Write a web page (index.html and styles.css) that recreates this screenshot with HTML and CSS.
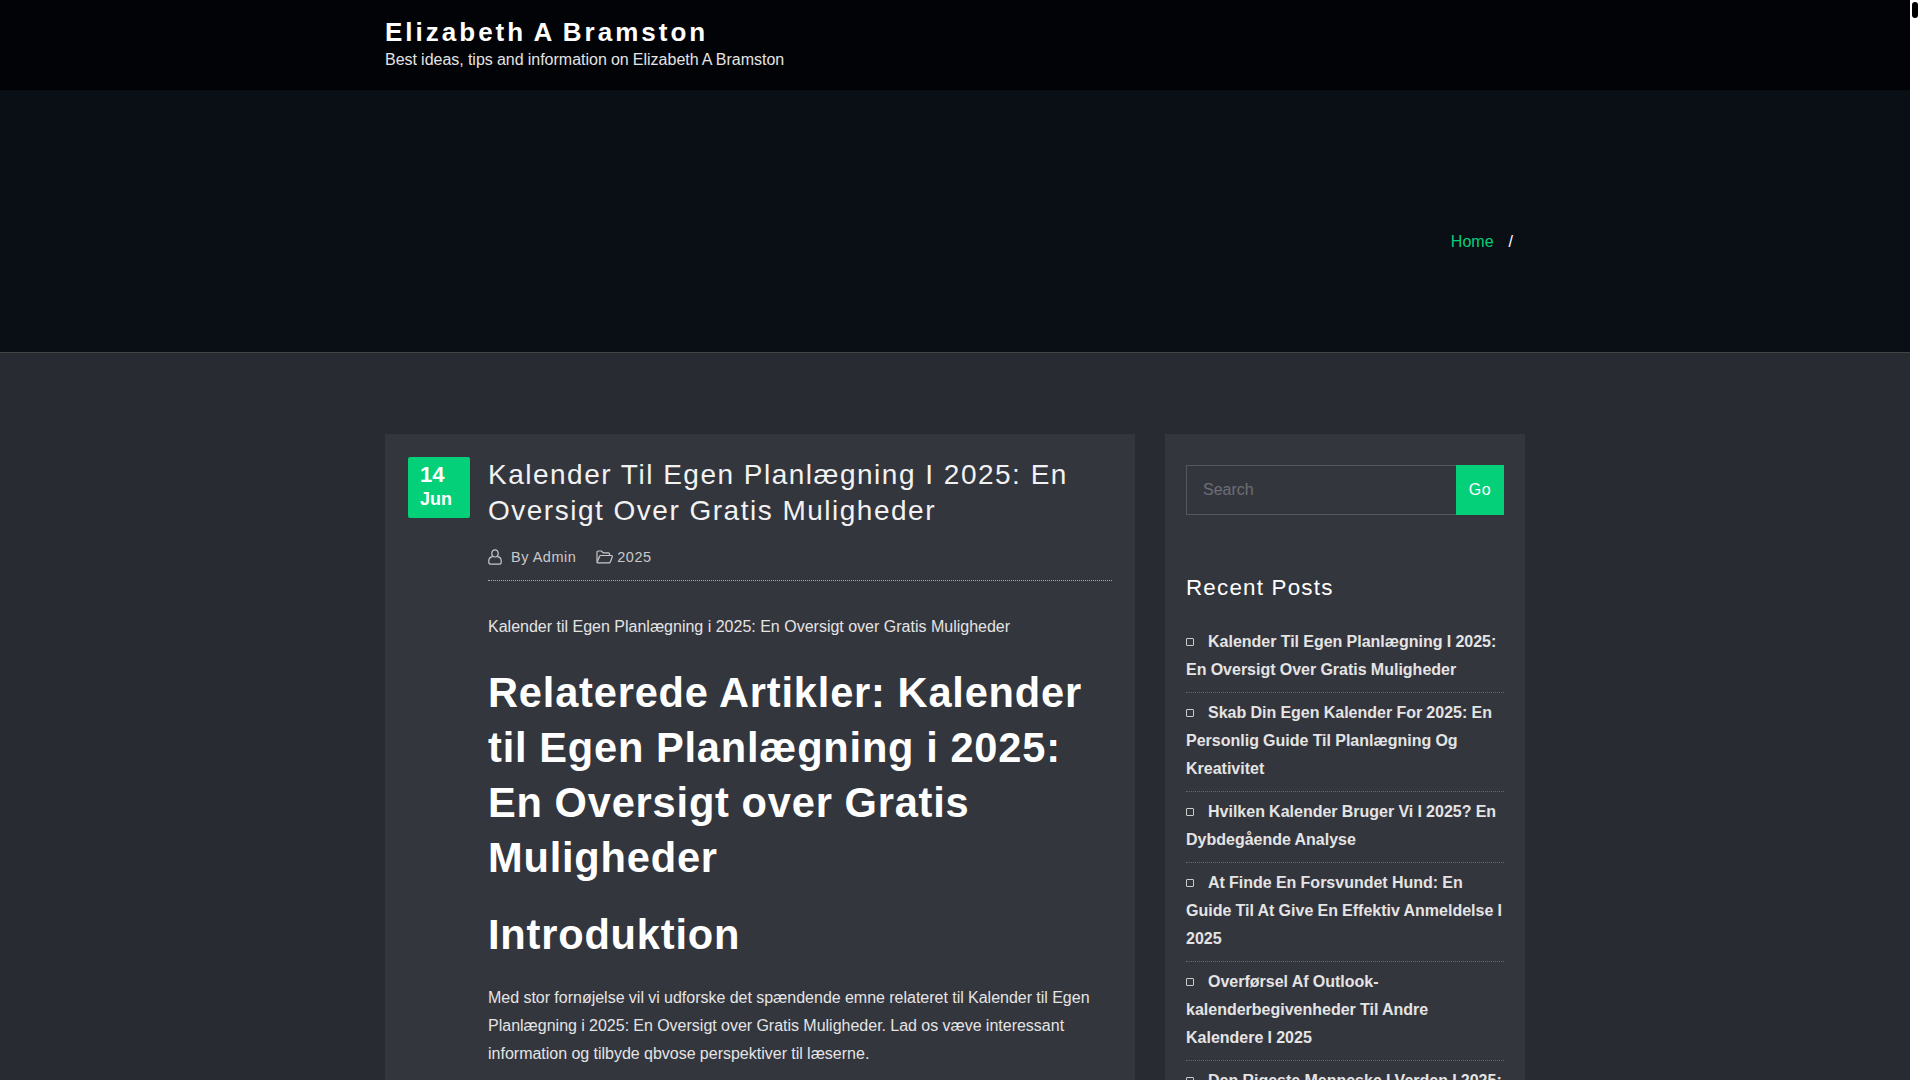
FILE: index.html
```html
<!DOCTYPE html>
<html lang="da">
<head>
    <meta charset="UTF-8">
    <title>Kalender Til Egen Planlægning I 2025</title>
    <link rel="stylesheet" href="styles.css">
</head>
<body>

<div class="page">
    <header class="site-header">
        <div class="container">
            <div class="site-title">Elizabeth A Bramston</div>
            <div class="site-desc">Best ideas, tips and information on Elizabeth A Bramston</div>
        </div>
    </header>

    <div class="page-banner">
        <div class="container breadcrumb">
            <a href="#">Home</a>
            <span>/</span>
        </div>
    </div>

    <div class="container content">
        <main class="post-card">
            <div class="date-badge">
                <span class="date-day">14</span>
                <span class="date-month">Jun</span>
            </div>
            <article class="post-body">
                <h1 class="post-title">Kalender Til Egen Planlægning I 2025: En Oversigt Over Gratis Muligheder</h1>
                <div class="post-meta">
                    <span class="meta-item">
                        <svg class="icon-user" viewBox="0 0 14 16" fill="none" stroke="currentColor" stroke-width="1.2">
                            <path d="M7 .8c-2 0-3.2 1.500-3.2 3.500S5 8 7 8s3.200-1.700 3.200-3.700S9 .8 7 .8z"/>
                            <path d="M4.500 7.600C2.500 8 .8 9.300.8 11.800v1.400c0 1 .8 1.900 1.900 1.900h8.600c1.100 0 1.900-.9 1.900-1.900v-1.400c0-2.500-1.700-3.800-3.700-4.200"/>
                        </svg>
                        By Admin
                    </span>
                    <span class="meta-item meta-cat">
                        <svg class="icon-folder" viewBox="0 0 17 14" fill="none" stroke="currentColor" stroke-width="1.2">
                            <path d="M1 11.500V2.300C1 1.600 1.500 1 2.200 1h3.300l1.700 1.800h5.100c.7 0 1.200.6 1.200 1.300v1.400"/>
                            <path d="M1 12.500l2.600-6.300c.2-.4.500-.7 1-.7h10.800c.7 0 1.100.6.900 1.200l-2 5.300c-.2.500-.6.800-1.100.8H1.800c-.5 0-.8-.1-.8-.3z"/>
                        </svg>
                        2025
                    </span>
                </div>
                <p class="post-lead">Kalender til Egen Planlægning i 2025: En Oversigt over Gratis Muligheder</p>
                <h2 class="post-h2">Relaterede Artikler: Kalender til Egen Planlægning i 2025: En Oversigt over Gratis Muligheder</h2>
                <h2 class="post-h2b">Introduktion</h2>
                <p class="post-text">Med stor fornøjelse vil vi udforske det spændende emne relateret til Kalender til Egen Planlægning i 2025: En Oversigt over Gratis Muligheder. Lad os væve interessant information og tilbyde qbvose perspektiver til læserne.</p>
            </article>
        </main>

        <aside class="sidebar">
            <form class="search-form">
                <input class="search-input" type="text" placeholder="Search">
                <button class="search-btn" type="button">Go</button>
            </form>
            <h3 class="widget-title">Recent Posts</h3>
            <ul class="recent-list">
                <li><a href="#">Kalender Til Egen Planlægning I 2025: En Oversigt Over Gratis Muligheder</a></li>
                <li><a href="#">Skab Din Egen Kalender For 2025: En Personlig Guide Til Planlægning Og Kreativitet</a></li>
                <li><a href="#">Hvilken Kalender Bruger Vi I 2025? En Dybdegående Analyse</a></li>
                <li><a href="#">At Finde En Forsvundet Hund: En Guide Til At Give En Effektiv Anmeldelse I 2025</a></li>
                <li><a href="#">Overførsel Af Outlook-kalenderbegivenheder Til Andre Kalendere I 2025</a></li>
                <li><a href="#">Den Rigeste Menneske I Verden I 2025: En Analyse</a></li>
            </ul>
        </aside>
    </div>
</div>

<div class="scroll-track"><div class="scroll-thumb"></div></div>

</body>
</html>
```

FILE: styles.css
```css
html, body {
    height: 100%;
}
body {
    margin: 0;
    display: flex;
    overflow: hidden;
    background-color: #fff;
    font-family: "Liberation Sans", Arial, sans-serif;
    font-size: 16px;
    color: #e4e4e4;
}
a {
    text-decoration: none;
}
.page {
    flex: 1;
    min-width: 0;
    height: 100vh;
    overflow: hidden;
    background-color: #282b32;
}
.scroll-track {
    width: 10px;
    flex-shrink: 0;
    background-color: #fff;
}
.scroll-thumb {
    width: 6px;
    height: 16px;
    margin: 2px;
    border-radius: 3px;
    background-color: #000;
}
.container {
    width: 1140px;
    margin: 0 auto;
}
.site-header {
    height: 90px;
    box-sizing: border-box;
    padding-top: 16px;
    background-color: #020307;
}
.site-title {
    font-size: 26px;
    font-weight: 700;
    line-height: 32px;
    letter-spacing: 3px;
    word-spacing: -1.8px;
    color: #fff;
}
.site-desc {
    font-size: 16px;
    line-height: 24px;
    word-spacing: -.35px;
    color: #e4e4e4;
}
.page-banner {
    height: 263px;
    box-sizing: border-box;
    border-bottom: 1px solid #444;
    background-color: #0a0e15;
}
.breadcrumb {
    display: flex;
    justify-content: flex-end;
    gap: 15px;
    box-sizing: border-box;
    padding: 140px 12px 0 0;
    line-height: 24px;
    color: #fff;
}
.breadcrumb a {
    color: #04d07a;
}
.content {
    display: flex;
    gap: 30px;
    padding-top: 81px;
}
.post-card {
    display: flex;
    width: 750px;
    box-sizing: border-box;
    padding: 23px 23px 0;
    background-color: #34363e;
}
.date-badge {
    display: flex;
    flex-direction: column;
    width: 62px;
    height: 61px;
    flex-shrink: 0;
    box-sizing: border-box;
    padding: 5px 0 0 12px;
    border-radius: 2px;
    background-color: #04d07a;
    color: #fff;
    font-weight: 700;
}
.date-day {
    font-size: 22px;
    line-height: 26px;
}
.date-month {
    font-size: 18px;
    line-height: 22px;
}
.post-body {
    flex: 1;
    margin-left: 18px;
}
.post-title {
    margin: 0;
    font-size: 28px;
    font-weight: 400;
    line-height: 36px;
    letter-spacing: 1.5px;
    color: #f2f2f2;
}
.post-meta {
    display: flex;
    align-items: center;
    gap: 20px;
    margin-top: 10px;
    padding: 6px 0 11px;
    border-bottom: 1px dotted #aaa;
    font-size: 14.5px;
    line-height: 24px;
    letter-spacing: .5px;
    color: #c9c9c9;
}
.meta-item {
    display: flex;
    align-items: center;
}
.icon-user {
    width: 14px;
    height: 16px;
    margin-right: 9px;
}
.icon-folder {
    width: 17px;
    height: 14px;
    margin-right: 4px;
}
.post-lead {
    margin: 32px 0 0;
    line-height: 28px;
}
.post-text {
    margin: 22px 0 0;
    line-height: 28px;
    word-spacing: -.18px;
}
.post-h2 {
    margin: 24px 0 0;
    font-size: 41.6px;
    line-height: 55px;
    letter-spacing: .8px;
    word-spacing: -.5px;
    color: #fff;
}
.post-h2b {
    margin: 22px 0 0;
    font-size: 41.6px;
    line-height: 55px;
    letter-spacing: .8px;
    color: #fff;
}
.sidebar {
    flex: 1;
    box-sizing: border-box;
    padding: 31px 21px 0;
    background-color: #34363e;
}
.search-form {
    display: flex;
    height: 50px;
}
.search-input {
    flex: 1;
    min-width: 0;
    box-sizing: border-box;
    padding: 0 16px;
    border: 1px solid #55575e;
    border-right: 0;
    background: transparent;
    font-family: inherit;
    font-size: 16px;
    color: #fff;
}
.search-input::placeholder {
    color: #6c6e75;
}
.search-btn {
    width: 48px;
    border: 0;
    background-color: #04d07a;
    color: #fff;
    font-family: inherit;
    font-size: 16px;
    letter-spacing: .5px;
}
.widget-title {
    margin: 58px 0 0;
    font-size: 22.4px;
    font-weight: 400;
    line-height: 30px;
    letter-spacing: 1.2px;
    color: #fff;
}
.recent-list {
    margin: 25px 0 0;
    padding: 0;
    list-style: none;
}
.recent-list li {
    padding-bottom: 8px;
    margin-bottom: 6px;
    border-bottom: 1px dotted #666;
    line-height: 28px;
    font-weight: 700;
    word-spacing: -.25px;
}
.recent-list a {
    color: #e4e4e4;
}
.recent-list li::before {
    content: "";
    display: inline-block;
    width: 6px;
    height: 6px;
    margin-right: 14px;
    vertical-align: 1px;
    border: 1px solid #ccc;
    border-radius: 1px;
}
```
